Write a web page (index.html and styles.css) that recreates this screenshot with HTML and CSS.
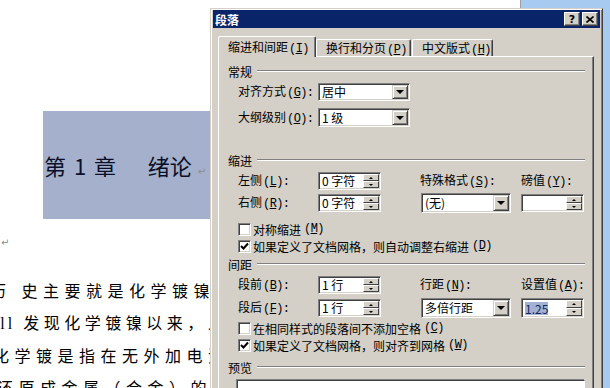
FILE: index.html
```html
<!DOCTYPE html>
<html lang="zh-CN">
<head>
  <meta charset="UTF-8" />
  <title>段落</title>
  <link rel="stylesheet" href="styles.css">
</head>
<body>
<div class="screen">

  <div class="doc">
    <div class="heading"><span class="h-txt">第 1 章&nbsp;&nbsp;&nbsp;&nbsp;绪论</span><span class="mark">↵</span></div>
    <div class="blank"><span class="mark">↵</span></div>
    <div class="ln l1"><span class="cut">历</span>史主要就是化学镀镍的</div>
    <div class="ln l2"><span class="lat">Riddell</span> 发现化学镀镍以来，人</div>
    <div class="ln l3">化学镀是指在无外加电流</div>
    <div class="ln l4">还原成金属（合金）的过</div>
  </div>
  <div class="desk"></div>

  <div class="dialog">
    <div class="titlebar">
      <span class="title">段落</span>
      <div class="tb-btns">
        <div class="tb-btn help">?</div>
        <div class="tb-btn">
          <svg width="8" height="7" viewBox="0 0 8 7"><path d="M0.5 0.5 L7.5 6.5 M7.5 0.5 L0.5 6.5" stroke="#000" stroke-width="1.6" fill="none"/></svg>
        </div>
      </div>
    </div>

    <div class="tabs">
      <div class="tab active t1">缩进和间距<span class="k">(<u>I</u>)</span></div>
      <div class="tab t2">换行和分页<span class="k">(<u>P</u>)</span></div>
      <div class="tab t3">中文版式<span class="k">(<u>H</u>)</span></div>
    </div>

    <div class="panel">
      <div class="grp g1"><span>常规</span></div>
      <div class="row r-align">
        <span class="lbl">对齐方式<span class="k">(<u>G</u>):</span></span>
        <div class="field combo w92"><span class="val">居中</span><div class="drop"><i class="tri"></i></div></div>
      </div>
      <div class="row r-outline">
        <span class="lbl">大纲级别<span class="k">(<u>O</u>):</span></span>
        <div class="field combo w92"><span class="val">1 级</span><div class="drop"><i class="tri"></i></div></div>
      </div>

      <div class="grp g2"><span>缩进</span></div>
      <div class="row r-left">
        <span class="lbl">左侧<span class="k">(<u>L</u>):</span></span>
        <div class="field spin w63"><span class="val">0 字符</span><div class="spins"><div class="sb"><i class="up"></i></div><div class="sb"><i class="dn"></i></div></div></div>
        <span></span>
        <span class="lbl">特殊格式<span class="k">(<u>S</u>):</span></span>
        <span class="lbl">磅值<span class="k">(<u>Y</u>):</span></span>
      </div>
      <div class="row r-right">
        <span class="lbl">右侧<span class="k">(<u>R</u>):</span></span>
        <div class="field spin w63"><span class="val">0 字符</span><div class="spins"><div class="sb"><i class="up"></i></div><div class="sb"><i class="dn"></i></div></div></div>
        <span></span>
        <div class="field combo w90 tall"><span class="val">(无)</span><div class="drop"><i class="tri"></i></div></div>
        <div class="field spin w63"><span class="val"></span><div class="spins"><div class="sb"><i class="up"></i></div><div class="sb"><i class="dn"></i></div></div></div>
      </div>
      <div class="check c1"><span class="box"></span>对称缩进<span class="k">(<u>M</u>)</span></div>
      <div class="check c2"><span class="box"><svg width="9" height="9" viewBox="0 0 9 9"><path d="M1 4 L3.5 6.5 L8 1.5" stroke="#000" stroke-width="2" fill="none"/></svg></span>如果定义了文档网格，则自动调整右缩进<span class="k">(<u>D</u>)</span></div>

      <div class="grp g3"><span>间距</span></div>
      <div class="row r-before">
        <span class="lbl">段前<span class="k">(<u>B</u>):</span></span>
        <div class="field spin w63"><span class="val">1 行</span><div class="spins"><div class="sb"><i class="up"></i></div><div class="sb"><i class="dn"></i></div></div></div>
        <span></span>
        <span class="lbl">行距<span class="k">(<u>N</u>):</span></span>
        <span class="lbl">设置值<span class="k">(<u>A</u>):</span></span>
      </div>
      <div class="row r-after">
        <span class="lbl">段后<span class="k">(<u>F</u>):</span></span>
        <div class="field spin w63"><span class="val">1 行</span><div class="spins"><div class="sb"><i class="up"></i></div><div class="sb"><i class="dn"></i></div></div></div>
        <span></span>
        <div class="field combo w90 tall"><span class="val">多倍行距</span><div class="drop"><i class="tri"></i></div></div>
        <div class="field spin w63 tall"><span class="val"><span class="sel">1.25</span></span><div class="spins"><div class="sb"><i class="up"></i></div><div class="sb"><i class="dn"></i></div></div></div>
      </div>
      <div class="check c3"><span class="box"></span>在相同样式的段落间不添加空格<span class="k">(<u>C</u>)</span></div>
      <div class="check c4"><span class="box"><svg width="9" height="9" viewBox="0 0 9 9"><path d="M1 4 L3.5 6.5 L8 1.5" stroke="#000" stroke-width="2" fill="none"/></svg></span>如果定义了文档网格，则对齐到网格<span class="k">(<u>W</u>)</span></div>

      <div class="grp g4"><span>预览</span></div>
      <div class="preview"></div>
    </div>
  </div>

</div>
</body>
</html>
```

FILE: styles.css
```css
body {
  margin: 0;
  padding: 0;
  font-family: "Noto Sans CJK SC", sans-serif;
}
.screen {
  position: relative;
  width: 610px;
  height: 388px;
  overflow: hidden;
  display: flex;
  background: #fff;
}

/* document behind the dialog */
.doc {
  width: 520px;
  padding-top: 111px;
  box-sizing: border-box;
  overflow: hidden;
}
.desk {
  flex: 1;
  background: #a6caf0;
  border-left: 1px solid #a0a0a0;
}
.heading {
  margin-left: 43px;
  height: 108px;
  background: #a5b1cc;
  display: flex;
  align-items: center;
  font-size: 22px;
  color: #0b0f28;
  word-spacing: 3px;
  white-space: nowrap;
}
.h-txt {
  margin-left: 1px;
}
.mark {
  font-family: "DejaVu Sans", sans-serif;
  font-size: 10px;
  color: #8c8c8c;
}
.heading .mark {
  margin-left: 6px;
  margin-top: 12px;
}
.blank {
  margin-top: 10px;
  height: 20px;
  line-height: 20px;
  padding-left: 1px;
}
.ln {
  font-size: 16px;
  letter-spacing: 5.5px;
  line-height: 32.5px;
  height: 32.5px;
  white-space: nowrap;
  color: #000;
}
.l1 {
  margin-top: 24.75px;
}
.cut {
  margin-left: -10px;
  margin-right: 10px;
}
.l2 {
  margin-left: -53px;
  letter-spacing: 4.5px;
}
.lat {
  font-family: "Liberation Serif", serif;
  letter-spacing: 3px;
}
.l3 {
  margin-left: -7px;
}
.l4 {
  margin-left: -3px;
}

/* dialog window */
.dialog {
  position: absolute;
  left: 210px;
  top: 8px;
  width: 393px;
  height: 400px;
  box-sizing: border-box;
  background: #d4d0c8;
  border: 1px solid;
  border-color: #d4d0c8 #404040 #404040 #d4d0c8;
  box-shadow: inset 1px 1px #fff, inset -1px -1px #808080;
  padding: 1px 2px 2px 2px;
  font-size: 12px;
  color: #000;
}
/* accelerator keys, half-width like the system font */
.k {
  font-family: "Liberation Mono", monospace;
  font-size: 12px;
  letter-spacing: -0.6px;
  margin-left: 1px;
}
.titlebar {
  height: 18px;
  background: #0a246a;
  display: flex;
  align-items: center;
  justify-content: space-between;
  padding: 0 2px;
}
.title {
  color: #fff;
  font-weight: bold;
  font-size: 12px;
}
.tb-btns {
  display: flex;
  gap: 2px;
}
.tb-btn {
  width: 16px;
  height: 14px;
  box-sizing: border-box;
  background: #d4d0c8;
  border: 1px solid;
  border-color: #fff #404040 #404040 #fff;
  box-shadow: inset -1px -1px #808080;
  display: flex;
  align-items: center;
  justify-content: center;
}
.help {
  font-family: "DejaVu Sans", sans-serif;
  font-weight: bold;
  font-size: 11px;
  line-height: 1;
}

/* tabs */
.tabs {
  display: flex;
  align-items: flex-end;
  margin-top: 8px;
  padding-left: 5px;
  height: 20px;
  position: relative;
  z-index: 1;
}
.tab {
  height: 17px;
  box-sizing: border-box;
  padding-left: 9px;
  line-height: 15px;
  white-space: nowrap;
  background: #d4d0c8;
  border-top: 1px solid #fff;
  border-left: 1px solid #fff;
  border-right: 1px solid #404040;
  box-shadow: inset -1px 0 #808080;
  border-radius: 2px 2px 0 0;
}
.tab.active {
  height: 21px;
  margin-bottom: -1px;
  line-height: 19px;
}
.t1 { width: 98px; }
.t2 { width: 95px; }
.t3 { width: 81px; margin-left: 1px; }

.panel {
  margin-left: 5px;
  width: 376px;
  height: 340px;
  box-sizing: border-box;
  border: 1px solid;
  border-color: #fff #404040 #404040 #fff;
  box-shadow: inset -1px -1px #808080;
  padding-top: 7px;
}

/* group headings with etched line */
.grp {
  display: flex;
  align-items: center;
  height: 14px;
  padding-left: 9px;
  margin-right: 8px;
  white-space: nowrap;
}
.grp::after {
  content: "";
  flex: 1;
  margin-left: 5px;
  border-top: 1px solid #808080;
  border-bottom: 1px solid #fff;
}
.g2 { margin-top: 26px; }
.g3 { margin-top: 4px; }
.g4 { margin-top: 8px; }

.row {
  display: grid;
  grid-template-columns: 80px 63px 39px 101px 63px;
  align-items: center;
  padding-left: 19px;
  height: 18px;
  white-space: nowrap;
}
.r-align { margin-top: 5px; }
.r-outline { margin-top: 7px; height: 19px; }
.r-left { margin-top: 5px; }
.r-right { margin-top: 3px; height: 20px; }
.r-before { margin-top: 5px; }
.r-after { margin-top: 4px; height: 20px; }
.lbl {
  line-height: 14px;
}

/* sunken edit / combo fields */
.field {
  height: 18px;
  box-sizing: border-box;
  background: #fff;
  border: 1px solid;
  border-color: #808080 #fff #fff #808080;
  box-shadow: inset 1px 1px #404040, inset -1px -1px #d4d0c8;
  padding: 1px;
  display: flex;
  align-items: stretch;
}
.r-outline .field { height: 19px; }
.field.tall { height: 20px; }
.w92 { width: 92px; grid-column: span 2; }
.w90 { width: 90px; margin-left: 1px; }
.w63 { width: 63px; }
.val {
  flex: 1;
  padding-left: 2px;
  line-height: 14px;
  display: flex;
  align-items: center;
  white-space: nowrap;
}
.sel {
  background: #a3b2d2;
  color: #14285c;
  line-height: 13px;
}
.drop {
  width: 16px;
  box-sizing: border-box;
  background: #d4d0c8;
  border: 1px solid;
  border-color: #d4d0c8 #404040 #404040 #d4d0c8;
  box-shadow: inset 1px 1px #fff, inset -1px -1px #808080;
  display: flex;
  align-items: center;
  justify-content: center;
}
.tri {
  width: 0;
  height: 0;
  border-left: 4px solid transparent;
  border-right: 4px solid transparent;
  border-top: 4px solid #000;
}
.spins {
  width: 16px;
  display: flex;
  flex-direction: column;
}
.sb {
  flex: 1;
  box-sizing: border-box;
  background: #d4d0c8;
  border: 1px solid;
  border-color: #fff #404040 #404040 #fff;
  display: flex;
  align-items: center;
  justify-content: center;
}
.up, .dn {
  width: 0;
  height: 0;
  border-left: 2px solid transparent;
  border-right: 2px solid transparent;
}
.up { border-bottom: 2px solid #000; }
.dn { border-top: 2px solid #000; }

/* checkboxes */
.check {
  display: flex;
  align-items: center;
  gap: 2px;
  height: 14px;
  padding-left: 19px;
  white-space: nowrap;
}
.box {
  width: 13px;
  height: 13px;
  box-sizing: border-box;
  background: #fff;
  border: 1px solid;
  border-color: #808080 #fff #fff #808080;
  box-shadow: inset 1px 1px #404040, inset -1px -1px #d4d0c8;
  display: flex;
  align-items: center;
  justify-content: center;
}
.c1 { margin-top: 9px; }
.c2 { margin-top: 3px; }
.c3 { margin-top: 3px; }
.c4 { margin-top: 3px; }

.preview {
  margin: 6px 0 0 18px;
  width: 348px;
  height: 60px;
  box-sizing: border-box;
  background: #fff;
  border: 1px solid;
  border-color: #404040 #fff #fff #404040;
  box-shadow: -1px -1px #808080;
}
```
